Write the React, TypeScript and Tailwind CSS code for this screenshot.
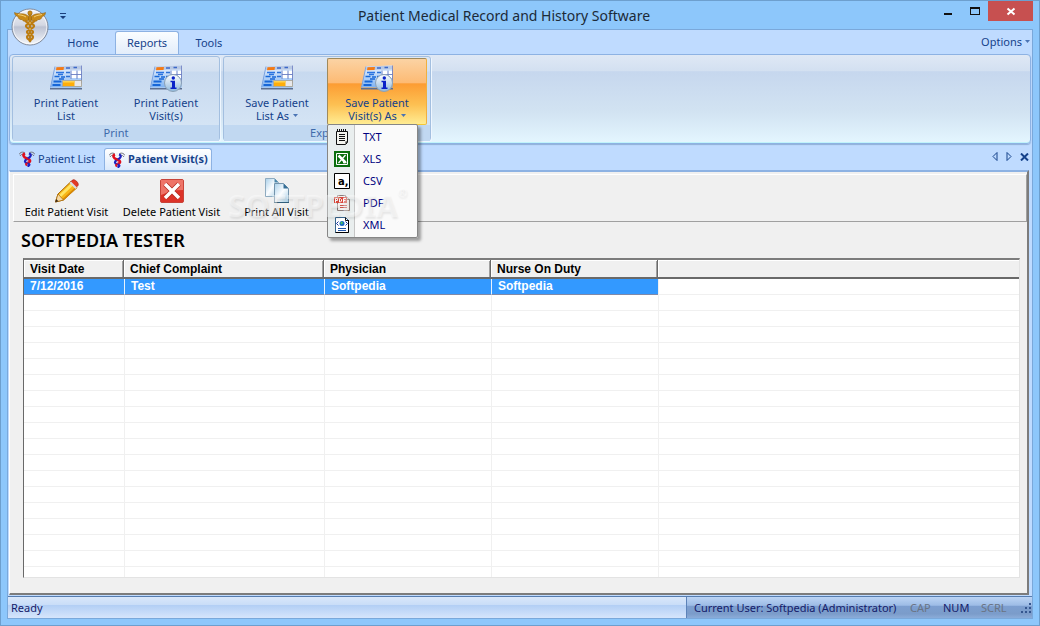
import clsx from "clsx";
import type { ReactNode } from "react";

const ribbonTabs = ["Home", "Reports", "Tools"];

const columns = ["Visit Date", "Chief Complaint", "Physician", "Nurse On Duty"];
const visits = [["7/12/2016", "Test", "Softpedia", "Softpedia"]];
const blankRows = Array.from({ length: 18 }, (_, i) => i);

function Caret({ className }: { className?: string }) {
  return (
    <svg width="5" height="3" viewBox="0 0 5 3" className={className}>
      <path d="M0 0h5L2.5 3z" fill="#4a74b4" />
    </svg>
  );
}

function Caduceus() {
  return (
    <svg width="38" height="38" viewBox="0 0 38 38">
      <defs>
        <linearGradient id="orb" x1="0" y1="0" x2="0" y2="1">
          <stop offset="0" stopColor="#f4f5f9" />
          <stop offset=".45" stopColor="#d3d7e2" />
          <stop offset=".5" stopColor="#bcc2d2" />
          <stop offset="1" stopColor="#f6f8fc" />
        </linearGradient>
      </defs>
      <circle cx="19" cy="19" r="18" fill="url(#orb)" stroke="#7f8899" />
      <circle cx="19" cy="19" r="16.8" fill="none" stroke="#fff" strokeOpacity=".7" />
      <g fill="#c98a17" stroke="#8a5a0a" strokeWidth=".5">
        <path d="M18 9C14 4 9 7 3.500 4.500c0 3 2.500 4 3.500 4 0 2.500 2.500 3.500 4 3 1 2 3 2 4 1.500l3-1z" />
        <path d="M20 9c4-5 9-2 14.500-4.500 0 3-2.500 4-3.500 4 0 2.500-2.500 3.500-4 3-1 2-3 2-4 1.500l-3-1z" />
        <path d="M17.800 6h2.400l-.4 28h-1.600z" />
        <circle cx="19" cy="5" r="2.200" />
      </g>
      <path
        d="M15 12c-2 3 8 3 8 6s-7 3-7 6 6 2 6 5-3 2-3 4M23 12c2 3-8 3-8 6s7 3 7 6-6 2-6 5 3 2 3 4"
        fill="none"
        stroke="#bd7c10"
        strokeWidth="2.200"
      />
      <path d="M7 6.500c3 .8 5 .5 8 2.500M31 6.500c-3 .8-5 .5-8 2.500M19 14v2M19 20v2M19 26v1" stroke="#f3cf73" strokeWidth="1" fill="none" />
    </svg>
  );
}

function SheetIcon({ info }: { info?: boolean }) {
  return (
    <svg width="34" height="28" viewBox="0 0 34 28">
      <defs>
        <linearGradient id="sheet" x1="0" y1="0" x2="0" y2="1">
          <stop offset="0" stopColor="#eef5ff" />
          <stop offset="1" stopColor="#7fb3f2" />
        </linearGradient>
        <linearGradient id="info" x1="0" y1="0" x2="0" y2="1">
          <stop offset="0" stopColor="#fff" />
          <stop offset="1" stopColor="#8fb8dc" />
        </linearGradient>
      </defs>
      <path d="M6 2.500L32.500 1.500v22H1.500z" fill="url(#sheet)" />
      <path d="M6 2.500L1.500 23.500" stroke="#7aa2e0" />
      <path d="M1 24h32v1.500H1z" fill="#5c6f90" />
      <path d="M6.300 2.500L32 1.500v4L5.700 6z" fill="#b9c9e4" />
      <path d="M7.500 3.300l7.500-.3-.5 3-7.500.3z" fill="#f47a13" />
      <path d="M17 4h4M24.500 3.500h3.500" stroke="#3c68c8" strokeWidth="1.500" />
      <path d="M7 8.500h8M9 10.500h5" stroke="#2a74e0" strokeWidth="1.300" />
      <path d="M5.500 12.500h5M12 13h4M10 15h5" stroke="#1767d8" strokeWidth="1.500" />
      <path d="M4.500 17.500h8M3.500 21h8" stroke="#1767d8" strokeWidth="1.800" />
      <path d="M17 8.500h4M17 12.500h4" stroke="#2d71d4" strokeWidth="1.500" />
      <path d="M22.500 7h5v3h-5zM22.500 11h5v3h-5zM28.500 7h3.500v3h-3.500zM28.500 11h3.500v3h-3.500z" fill="#fff" />
      <path d="M22 6.500v8.500M28 6.500v8.500M22 10.500h10.500M32.500 1.500v18" stroke="#6676bc" strokeWidth=".8" />
      {info ? (
        <>
          <circle cx="24" cy="19" r="8.500" fill="url(#info)" stroke="#8aa0b6" />
          <circle cx="24.300" cy="14" r="1.700" fill="#0a22c8" />
          <path d="M21.500 16.800h4.500v6.700h1.500V25h-6v-1.500H23v-5.200h-1.500z" fill="#0a22c8" />
        </>
      ) : (
        <>
          <path d="M13.500 16.500h19v6h-19z" fill="#e8e8ea" stroke="#a39a80" strokeWidth=".7" />
          <path d="M14 17h11.500v5H14z" fill="#ffad0a" />
          <path d="M14 17h11.500v1.500H14z" fill="#ffd34f" />
        </>
      )}
    </svg>
  );
}

function SnakeIcon() {
  return (
    <svg width="16" height="16" viewBox="0 0 16 16">
      <path
        d="M0 3.500C1 1.500 3 .5 5.500 1.500M16 3.500C15 1.500 13 .5 10.500 1.500M1 5c1-1.500 2-2 3.500-1.500M15 5c-1-1.500-2-2-3.500-1.500"
        stroke="#74747c"
        fill="none"
      />
      <path d="M6 2.500C3.500 3.500 4 6 8 7.500s4 3.500.5 4.500" stroke="#e00f1c" strokeWidth="2.600" fill="none" />
      <path d="M10 2.500c3 1 2 3.500-2 5.500-3 1.500-2.500 4 .5 4.500s2 2 0 3" stroke="#1d22c0" strokeWidth="2.200" fill="none" />
      <path d="M6.500 7l3 1.500M8.500 12c-2 .5-2 1.500-.5 2.500" stroke="#e00f1c" strokeWidth="1.800" fill="none" />
      <path d="M8 1v4" stroke="#eee" />
    </svg>
  );
}

function PencilIcon() {
  return (
    <svg width="26" height="24" viewBox="0 0 26 24">
      <path d="M1.500 23L4 15 17 2.500l6 6L9.500 21z" fill="#f8b617" stroke="#a86806" />
      <path d="M5 16L17.500 4l2 2L7 18z" fill="#ffe464" />
      <path d="M8.500 20L21.500 8l1.500 1L10 21z" fill="#d88908" />
      <path d="M1.500 23L4 15l5.500 6z" fill="#f6d9a5" stroke="#a86806" strokeWidth=".7" />
      <path d="M1.200 23.300l1-3.300 2.200 2.200z" fill="#39281a" />
      <path d="M16.500 3l2-2c2-1.500 7 3 5.500 5.500l-2 2z" fill="#e33a24" stroke="#a32013" strokeWidth=".7" />
      <path d="M15.500 4l1.500-1.500 6 6-1.500 1.500z" fill="#d9dde2" />
    </svg>
  );
}

function DeleteIcon() {
  return (
    <svg width="24" height="24" viewBox="0 0 24 24">
      <rect x=".5" y=".5" width="23" height="23" rx="1.500" fill="#dc3328" stroke="#c8443a" />
      <path d="M1 1h22v10C15 11 8 13 1 16z" fill="#ee7468" />
      <path d="M5 5l14 14M19 5L5 19" stroke="#b42a20" strokeWidth="5" />
      <path d="M5 5l14 14M19 5L5 19" stroke="#fff" strokeWidth="3.500" />
    </svg>
  );
}

function PagesIcon() {
  return (
    <svg width="26" height="26" viewBox="0 0 26 26">
      <defs>
        <linearGradient id="page" x1="0" y1="0" x2="1" y2="1">
          <stop offset="0" stopColor="#a9d0ea" />
          <stop offset=".5" stopColor="#fbfdff" />
          <stop offset="1" stopColor="#a5cce4" />
        </linearGradient>
      </defs>
      <path d="M1.500.5h9l4 4v14h-13z" fill="url(#page)" stroke="#8fabc0" />
      <path d="M10.500.5v4h4z" fill="#4a87ab" />
      <path d="M10.500 5.500h9l5 5v14h-14z" fill="url(#page)" stroke="#7394ad" />
      <path d="M19.500 5.500v5h5z" fill="#376f96" />
      <path d="M10 24.500h15" stroke="#315e7b" />
    </svg>
  );
}

function TxtIcon() {
  return (
    <svg width="16" height="16" viewBox="0 0 16 16">
      <path d="M2.500 2.500h11v11l-2 2h-9z" fill="#f4f4ee" stroke="#111" />
      <path d="M3.500 0v3M5.500 0v3M7.500 0v3M9.500 0v3M11.500 0v3" stroke="#111" />
      <path d="M5 5.500h6M5 7.500h6M5 9.500h6M5 11.500h6" stroke="#111" />
      <path d="M13.500 12.500l-2 3v-3z" fill="#111" />
    </svg>
  );
}

function XlsIcon() {
  return (
    <svg width="16" height="16" viewBox="0 0 16 16">
      <path d="M0 0h16v16H0z" fill="#0a6e0d" />
      <path d="M2.500 2.500h11v11h-11z" fill="#0a6e0d" stroke="#fff" />
      <path d="M4.500 4.500l7 7" stroke="#fff" strokeWidth="2.500" />
      <path d="M11.500 4l-7 8M9 11.500h3.500" stroke="#fff" strokeWidth="1.300" />
    </svg>
  );
}

function CsvIcon() {
  return (
    <svg width="16" height="16" viewBox="0 0 16 16">
      <path d="M.5.500h15v15H.5z" fill="#fff" stroke="#000" />
      <text x="4" y="12" fontFamily="DejaVu Sans" fontWeight="bold" fontSize="10">
        a,
      </text>
    </svg>
  );
}

function PdfIcon() {
  return (
    <svg width="16" height="16" viewBox="0 0 16 16">
      <path d="M3.500.5h8l4 4v11h-12z" fill="#f4f1ef" stroke="#8b7d7a" />
      <path d="M11.500.5v4h4" fill="#ddd" stroke="#8b7d7a" />
      <path d="M0 2h13v6H0z" fill="#d9473a" />
      <path d="M1.500 7.500v-4h2v2h-2M5.500 3.500v3.500h1l1-1V4.500l-1-1zM9.500 7.500v-4h2.500M9.500 5.500h2" stroke="#fff" fill="none" />
      <path d="M6 10.500h7M6 12.500h7" stroke="#c9564b" />
    </svg>
  );
}

function XmlIcon() {
  return (
    <svg width="16" height="16" viewBox="0 0 16 16">
      <path d="M1.500.5h10l3 3v12h-13z" fill="#fff" stroke="#38658c" />
      <path d="M14.500 3v12.500h-13" stroke="#000" fill="none" />
      <path d="M11.500.5v3h3" fill="none" stroke="#111" />
      <circle cx="8" cy="6.500" r="2.500" fill="#1668c4" />
      <path d="M7 4.500l2 1-1 2-1.500-1z" fill="#4cc25a" />
      <path d="M4.500 4.500l-2 2 2 2M11.500 4.500l2 2-2 2" stroke="#15309a" fill="none" />
      <path d="M4 11.500h8M4 13.500h8" stroke="#2055a8" />
    </svg>
  );
}

const exportFormats = [
  { label: "TXT", icon: <TxtIcon /> },
  { label: "XLS", icon: <XlsIcon /> },
  { label: "CSV", icon: <CsvIcon /> },
  { label: "PDF", icon: <PdfIcon /> },
  { label: "XML", icon: <XmlIcon /> },
];

interface RibbonButtonProps {
  lines: [string, string];
  info?: boolean;
  menu?: boolean;
  active?: boolean;
}

function RibbonButton({ lines, info, menu, active }: RibbonButtonProps) {
  return (
    <button
      type="button"
      aria-expanded={active}
      className={clsx(
        "flex h-[67px] w-[100px] flex-col items-center rounded-xs border text-[11px] leading-[13px] text-[#15428b]",
        active
          ? "border-[#a08a5c] border-r-[#f0b040] border-b-[#f4c838] bg-[linear-gradient(#fbd3a4,#fdba73_37%,#fc9c33_38%,#fdc052_70%,#ffec92)]"
          : "border-transparent",
      )}
    >
      <span className="flex h-[37px] items-center">
        <SheetIcon info={info} />
      </span>
      <span>{lines[0]}</span>
      <span className="flex items-center gap-1">
        {lines[1]}
        {menu && <Caret />}
      </span>
    </button>
  );
}

function RibbonGroup({ title, children }: { title: string; children: ReactNode }) {
  return (
    <section className="flex w-52 flex-col rounded-[3px] border border-[#a3bfe0] bg-[linear-gradient(#dde7f4,#d3e0f1_17%,#c7d9ef_18%,#d8e7f6)] shadow-[1px_1px_0_#eef6ff]">
      <div className="flex grow px-[3px] pt-px">{children}</div>
      <h2 className="h-4 bg-[#c1d8f1] text-center text-[11px] leading-4 text-[#3e6aaa]">{title}</h2>
    </section>
  );
}

function ExportMenu() {
  return (
    <ul
      role="menu"
      className="absolute top-[66px] left-0 z-10 w-[91px] rounded-xs border border-[#868686] bg-[linear-gradient(90deg,#e9eeee_26px,#c5c5c5_26px,#c5c5c5_27px,#fafafa_27px)] py-px shadow-[3px_3px_3px_rgba(0,0,0,0.35)]"
    >
      {exportFormats.map(({ label, icon }) => (
        <li key={label} role="none">
          <button
            type="button"
            role="menuitem"
            className="flex h-[22px] w-full items-center gap-[13px] pl-1.5 text-[11px] text-[#00007f]"
          >
            {icon}
            {label}
          </button>
        </li>
      ))}
    </ul>
  );
}

function ToolButton({ label, icon }: { label: string; icon: ReactNode }) {
  return (
    <button type="button" className="flex w-[105px] flex-col items-center whitespace-nowrap text-[11px] leading-4 text-black">
      <span className="flex h-[26px] items-center">{icon}</span>
      {label}
    </button>
  );
}

function TitleBar() {
  return (
    <header className="relative flex h-7 shrink-0 items-start">
      <div className="absolute top-[7px] left-2.5 z-10">
        <button type="button" aria-label="Application menu" className="block">
          <Caduceus />
        </button>
      </div>
      <button type="button" aria-label="Customize toolbar" className="ml-[59px] pt-3">
        <svg width="6" height="6" viewBox="0 0 6 6" className="block">
          <path d="M0 0h6v1H0zM0 3h6L3 6z" fill="#1b3f7c" />
        </svg>
      </button>
      <h1 className="grow pt-[5px] pl-2 text-center text-[14px] leading-5 text-[#1c2a38]">
        Patient Medical Record and History Software
      </h1>
      <div className="flex pr-1.5">
        <button type="button" aria-label="Minimize" className="h-5 w-7">
          <svg width="28" height="20" viewBox="0 0 28 20">
            <path d="M10 12h8v2h-8z" fill="#111" />
          </svg>
        </button>
        <button type="button" aria-label="Maximize" className="h-5 w-[26px]">
          <svg width="26" height="20" viewBox="0 0 26 20">
            <path d="M8 6h10v8H8zM9 8v5h8V8z" fill="#111" fillRule="evenodd" />
          </svg>
        </button>
        <button type="button" aria-label="Close" className="h-5 w-[45px] bg-[#c75050]">
          <svg width="45" height="20" viewBox="0 0 45 20">
            <path d="M19.500 7.500l7 6M26.500 7.500l-7 6" stroke="#fff" strokeWidth="2" />
          </svg>
        </button>
      </div>
    </header>
  );
}

function Ribbon() {
  return (
    <>
      <nav className="flex h-6 shrink-0 items-end pl-[43px] text-[11px] text-[#15428b]">
        {ribbonTabs.map((tab) => (
          <button
            key={tab}
            type="button"
            className={clsx(
              "h-[23px] pt-px",
              tab === "Tools" ? "w-[60px]" : "w-16",
              tab === "Reports" && "rounded-t-[3px] border border-b-0 border-[#8db2e3] bg-[linear-gradient(#fafdff,#e3edfa)]",
            )}
          >
            {tab}
          </button>
        ))}
        <button type="button" className="ml-auto flex h-[23px] items-center gap-[3px] pr-0.5">
          Options
          <Caret className="mb-[3px]" />
        </button>
      </nav>
      <div className="mx-px flex h-[90px] shrink-0 gap-[3px] rounded border border-[#8db2e3] bg-[linear-gradient(#dfe8f5,#d3e0f1_18%,#c6d7ee_19%,#d2e3f2_65%,#e4f6ff)] p-px pb-0.5 pl-0.5 shadow-[0_1px_1px_#8fb0d8,inset_0_-1px_0_#c0f4fb]">
        <RibbonGroup title="Print">
          <RibbonButton lines={["Print Patient", "List"]} />
          <RibbonButton lines={["Print Patient", "Visit(s)"]} info />
        </RibbonGroup>
        <RibbonGroup title="Export">
          <RibbonButton lines={["Save Patient", "List As"]} menu />
          <div className="relative">
            <RibbonButton lines={["Save Patient", "Visit(s) As"]} info menu active />
            <ExportMenu />
          </div>
        </RibbonGroup>
      </div>
    </>
  );
}

function DocumentTabs() {
  return (
    <nav className="flex h-[26px] shrink-0 items-end pl-[11px] text-[11px] text-[#15428b]">
      <button type="button" className="flex h-[22px] w-[85px] items-center gap-[3px] whitespace-nowrap">
        <SnakeIcon />
        Patient List
      </button>
      <button
        type="button"
        className="flex h-[22px] w-[108px] items-center gap-[3px] whitespace-nowrap rounded-t-[3px] border border-b-0 border-[#8db2e3] bg-[linear-gradient(#fff,#dbe9fb)] pl-1 font-bold"
      >
        <SnakeIcon />
        Patient Visit(s)
      </button>
      <div className="mb-[9px] ml-auto flex items-center gap-2 pr-[3px]">
        <button type="button" aria-label="Previous tab">
          <svg width="6" height="9" viewBox="0 0 6 9" className="block">
            <path d="M5 .5v8l-4-4z" fill="none" stroke="#15428b" />
          </svg>
        </button>
        <button type="button" aria-label="Next tab">
          <svg width="6" height="9" viewBox="0 0 6 9" className="block">
            <path d="M1 .5v8l4-4z" fill="none" stroke="#15428b" />
          </svg>
        </button>
        <button type="button" aria-label="Close tab">
          <svg width="9" height="8" viewBox="0 0 9 8" className="block">
            <path d="M1 .5l7 7M8 .5l-7 7" stroke="#15428b" strokeWidth="2" />
          </svg>
        </button>
      </div>
    </nav>
  );
}

function VisitTable() {
  return (
    <div className="mr-[7px] ml-2.5 min-h-0 flex-1 overflow-hidden border border-t-2 border-[#e3e3e3] border-t-[#7c7c7c] border-l-[#696969] bg-white font-[Liberation_Sans,Arial,sans-serif] text-[12px] font-bold">
      <table className="w-full table-fixed border-separate border-spacing-0 text-left">
        <colgroup>
          <col className="w-[100px]" />
          <col className="w-[200px]" />
          <col className="w-[167px]" />
          <col className="w-[167px]" />
          <col />
        </colgroup>
        <thead>
          <tr className="h-[19px] bg-[#f0f0f0] leading-4 text-black">
            {columns.map((name) => (
              <th key={name} className="border-r border-b-2 border-[#696969] px-1.5 py-0 shadow-[inset_1px_1px_0_#fff,inset_-1px_0_0_#a0a0a0]">
                {name}
              </th>
            ))}
            <th className="border-b-2 border-[#696969] p-0 shadow-[inset_1px_1px_0_#fff]" />
          </tr>
        </thead>
        <tbody>
          {visits.map((visit) => (
            <tr key={visit[0]} className="h-4 leading-[15px] text-white">
              {visit.map((value, i) => (
                <td
                  key={columns[i]}
                  className={clsx(
                    "border-b border-b-[#8089a8] bg-[#3399ff] py-0 pr-1 pl-1.5",
                    i > 0 && "border-l border-l-[#e8f2fc]",
                  )}
                >
                  {value}
                </td>
              ))}
              <td className="border-b border-l border-[#f0f0f0] p-0" />
            </tr>
          ))}
          {blankRows.map((row) => (
            <tr key={row} className="h-4">
              <td className="border-b border-[#f0f0f0] p-0" />
              {columns.map((name) => (
                <td key={name} className="border-b border-l border-[#f0f0f0] p-0" />
              ))}
            </tr>
          ))}
        </tbody>
      </table>
    </div>
  );
}

function StatusBar() {
  return (
    <footer className="mt-px flex h-[22px] shrink-0 border-t border-[#567db0] text-[11px] leading-[21px] text-[#15206a]">
      <div className="grow bg-[linear-gradient(#d9e7fa,#c9ddf8_38%,#b3cff5_40%,#d6e5fb)] pl-[3px]">Ready</div>
      <div className="flex w-[346px] items-center border-l border-[#5c82b8] bg-[linear-gradient(#bcd4f4,#9dbce6_40%,#7d9fd0_42%,#7b9cca_80%,#8bacd9)] pl-[7px] whitespace-nowrap">
        <span className="w-[216px]">Current User: Softpedia (Administrator)</span>
        <span className="w-[33px] text-[#6a7484]">CAP</span>
        <span className="w-[38px]">NUM</span>
        <span className="w-9 text-[#6a7484]">SCRL</span>
        <svg width="12" height="12" viewBox="0 0 12 12" className="ml-auto">
          <path d="M9 1h2v2H9zM9 5h2v2H9zM9 9h2v2H9zM5 5h2v2H5zM5 9h2v2H5zM1 9h2v2H1z" fill="#35568f" />
        </svg>
      </div>
    </footer>
  );
}

export default function App() {
  return (
    <div className="flex h-screen flex-col border border-[#6d9fce] bg-[#8dc7fb] font-[Noto_Sans,Open_Sans,sans-serif]">
      <TitleBar />
      <div className="mx-1.5 mb-1.5 flex min-h-0 flex-1 flex-col border border-[#7aa8da] bg-[#bfdbff]">
        <Ribbon />
        <DocumentTabs />
        <main className="relative mr-[3px] ml-px flex min-h-0 flex-1 flex-col border border-t-2 border-[#fff] border-t-[#8db2e3] border-r-2 border-r-[#7c7c7c] border-b-2 border-b-[#7c7c7c] bg-[#f0f0f0] pt-0.5 pb-[15px] pl-[3px]">
          <div className="flex h-12 shrink-0 border border-[#a0a0a0] border-t-white border-l-white pt-[3px]">
            <ToolButton label="Edit Patient Visit" icon={<PencilIcon />} />
            <ToolButton label="Delete Patient Visit" icon={<DeleteIcon />} />
            <ToolButton label="Print All Visit" icon={<PagesIcon />} />
          </div>
          <h2 className="h-9 shrink-0 pl-2 text-[18px] leading-9 font-semibold text-black">SOFTPEDIA TESTER</h2>
          <VisitTable />
          <div
            aria-hidden="true"
            className="pointer-events-none absolute top-[13px] left-[218px] z-20 flex items-start text-[31px] leading-10 font-bold text-white/40 [text-shadow:1px_2px_2px_rgba(0,0,0,0.08)]"
          >
            SOFTPEDIA
            <span className="text-[12px] leading-4">®</span>
          </div>
        </main>
        <StatusBar />
      </div>
    </div>
  );
}
